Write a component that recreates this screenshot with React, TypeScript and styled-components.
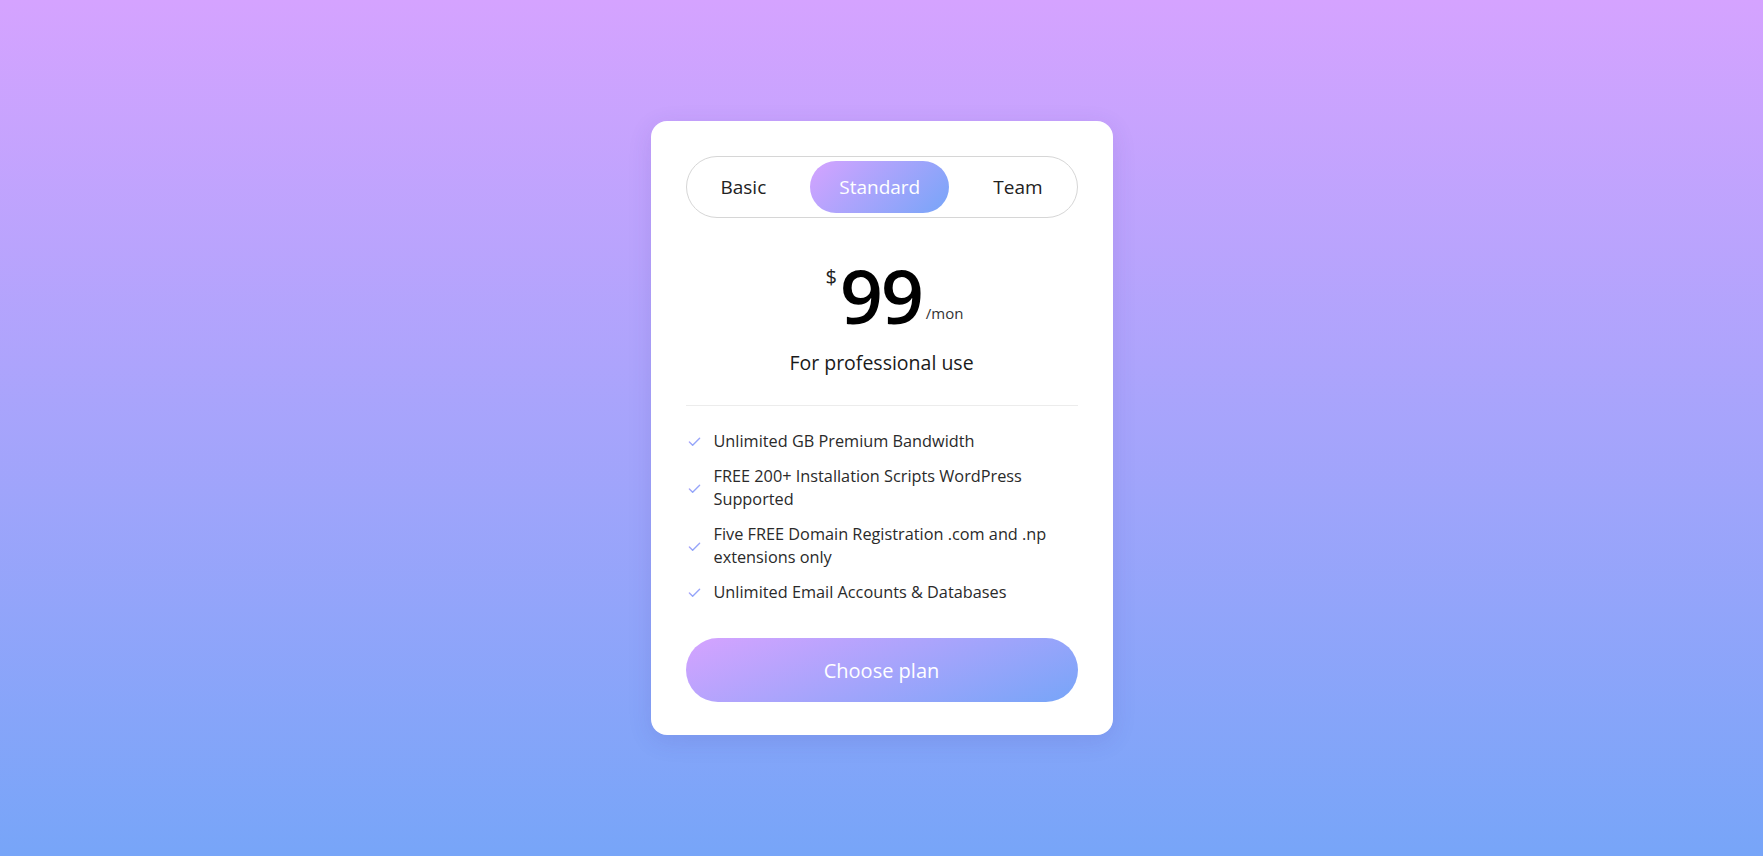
import React, { useState } from "react";
import styled, { createGlobalStyle } from "styled-components";

const GlobalStyle = createGlobalStyle`
  * { box-sizing: border-box; margin: 0; padding: 0; }
  html, body { height: 100%; }
  body {
    font-family: "Open Sans", "Noto Sans", sans-serif;
    background: linear-gradient(to bottom, #d5a3ff 0%, #77a5f8 100%);
    min-height: 100vh;
  }
`;

const Page = styled.main`
  min-height: 100vh;
  display: flex;
  align-items: center;
  justify-content: center;
`;

const Card = styled.section`
  width: 462px;
  padding: 35px 35px 33px;
  background: #fff;
  border-radius: 16px;
  box-shadow: 0 6px 24px rgba(60, 40, 140, 0.12);
  display: flex;
  flex-direction: column;
`;

const Tabs = styled.div`
  height: 62px;
  border: 1px solid #d6d6d6;
  border-radius: 31px;
  padding: 4px;
  display: flex;
  align-items: stretch;
  justify-content: center;
  gap: 15px;
`;

const Tab = styled.button<{ $active?: boolean }>`
  border: none;
  border-radius: 26px;
  padding: 0 29px;
  font-family: inherit;
  font-size: 19px;
  cursor: pointer;
  color: ${(p) => (p.$active ? "#fff" : "#222")};
  background: ${(p) =>
    p.$active ? "linear-gradient(135deg, #d5a3ff 0%, #77a5f8 100%)" : "transparent"};
`;

const PriceRow = styled.div`
  display: flex;
  justify-content: center;
  align-items: flex-end;
  margin-top: 34px;
  padding-left: 26px;
  color: #000;
`;

const Currency = styled.span`
  font-size: 20px;
  align-self: flex-start;
  margin-top: 11px;
  margin-right: 3px;
  color: #222;
`;

const Amount = styled.span`
  font-size: 75px;
  font-weight: 600;
  line-height: 86px;
  letter-spacing: -2px;
`;

const Period = styled.span`
  font-size: 15px;
  margin-left: 4px;
  margin-bottom: 15px;
  color: #333;
`;

const Subtitle = styled.p`
  text-align: center;
  font-size: 19.5px;
  color: #1a1a1a;
  margin-top: 11px;
`;

const Divider = styled.hr`
  border: none;
  border-top: 1px solid #ececec;
  margin: 29px 0 24px;
`;

const Features = styled.ul`
  list-style: none;
  display: flex;
  flex-direction: column;
  gap: 12px;
`;

const Feature = styled.li`
  display: flex;
  align-items: center;
  font-size: 16.3px;
  line-height: 23px;
  color: #2a2a2a;
`;

const Check = styled.svg`
  width: 13px;
  height: 13px;
  flex: none;
  margin: 0 13px 0 2px;
`;

const ChooseButton = styled.button`
  margin-top: 34px;
  height: 64px;
  border: none;
  border-radius: 32px;
  font-family: inherit;
  font-size: 20px;
  color: #fff;
  cursor: pointer;
  background: linear-gradient(160deg, #d5a3ff 0%, #77a5f8 100%);
`;

const features = [
  "Unlimited GB Premium Bandwidth",
  "FREE 200+ Installation Scripts WordPress Supported",
  "Five FREE Domain Registration .com and .np extensions only",
  "Unlimited Email Accounts & Databases",
];

const CheckIcon = () => (
  <Check viewBox="0 0 14 14" fill="none">
    <defs>
      <linearGradient id="chk" x1="0" y1="0" x2="1" y2="1">
        <stop offset="0" stopColor="#b5a2fb" />
        <stop offset="1" stopColor="#7ea7f8" />
      </linearGradient>
    </defs>
    <polyline
      points="1.5,7.5 5,11 12.5,3.5"
      stroke="url(#chk)"
      strokeWidth="1.5"
      strokeLinecap="round"
      strokeLinejoin="round"
    />
  </Check>
);

export default function App() {
  const [active, setActive] = useState("Standard");
  return (
    <>
      <GlobalStyle />
      <Page>
        <Card>
          <Tabs>
            {["Basic", "Standard", "Team"].map((t) => (
              <Tab key={t} $active={active === t} onClick={() => setActive(t)}>
                {t}
              </Tab>
            ))}
          </Tabs>
          <PriceRow>
            <Currency>$</Currency>
            <Amount>99</Amount>
            <Period>/mon</Period>
          </PriceRow>
          <Subtitle>For professional use</Subtitle>
          <Divider />
          <Features>
            {features.map((f) => (
              <Feature key={f}>
                <CheckIcon />
                <span>{f}</span>
              </Feature>
            ))}
          </Features>
          <ChooseButton>Choose plan</ChooseButton>
        </Card>
      </Page>
    </>
  );
}
